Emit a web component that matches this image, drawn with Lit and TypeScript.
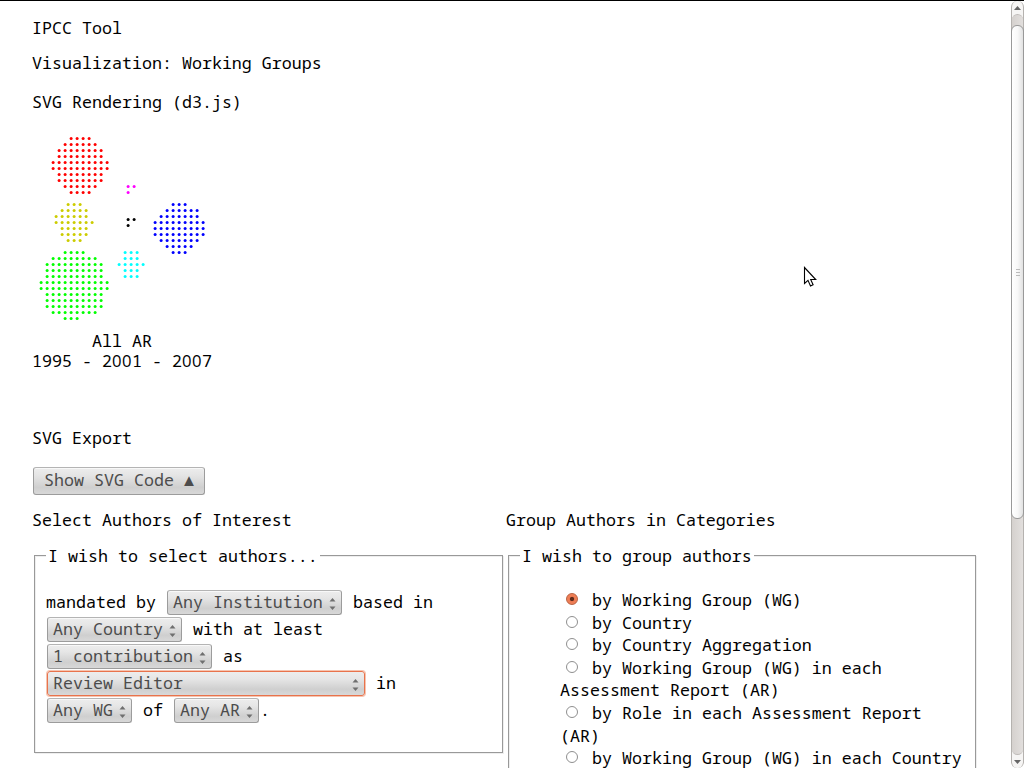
import { LitElement, html, svg, css } from "lit";
import { customElement, property, state } from "lit/decorators.js";

const STEP = 6;

/** One cluster of authors: colour, top row, and [first x, dot count] per row. */
interface Cluster {
  color: string;
  y: number;
  rows: [number, number][];
}

const CLUSTERS: Cluster[] = [
  { color: "#ff0000", y: 138.5, rows: [[71, 4], [65, 6], [59, 8], [59, 8], [53, 10], [53, 10], [59, 8], [59, 8], [65, 6], [71, 4]] },
  { color: "#cccc00", y: 204.5, rows: [[68, 3], [62, 5], [56, 6], [56, 7], [62, 5], [62, 5], [68, 3]] },
  { color: "#00ff00", y: 252.5, rows: [[65, 4], [53, 8], [47, 10], [47, 10], [47, 10], [41, 12], [41, 12], [47, 10], [47, 10], [47, 10], [53, 8], [65, 3]] },
  { color: "#0000ff", y: 204.5, rows: [[173, 3], [167, 6], [161, 7], [155, 9], [155, 9], [155, 9], [161, 7], [167, 5], [173, 3]] },
  { color: "#00ffff", y: 252.5, rows: [[125, 3], [125, 3], [119, 5], [125, 3], [125, 3]] },
  { color: "#ff00ff", y: 186.5, rows: [[128, 2], [128, 1]] },
  { color: "#000000", y: 219.5, rows: [[128, 2], [128, 1]] },
];

@customElement("author-plot")
class AuthorPlot extends LitElement {
  static styles = css`
    :host { display: block; }
    svg { display: block; }
  `;
  render() {
    return html`<svg width="200" height="200" viewBox="32 128 200 200">
      ${CLUSTERS.map((c) => svg`<g fill=${c.color}>${c.rows.map(([x, n], r) =>
        Array.from({ length: n }, (_, i) =>
          svg`<circle cx=${x + i * STEP + 0.1} cy=${c.y + r * STEP} r="1.5"></circle>`))}</g>`)}
    </svg>`;
  }
}

@customElement("drop-down")
class DropDown extends LitElement {
  @property() label = "";
  @property({ type: Boolean, reflect: true }) active = false;
  static styles = css`
    :host {
      box-sizing: border-box;
      display: inline-flex;
      justify-content: space-between;
      align-items: center;
      height: 25px;
      margin: 2px 1px 0;
      padding: 0 5px 2px 5px;
      border: 1px solid #9c9c9c;
      border-top-color: #b4b4b4;
      border-radius: 3px;
      background: linear-gradient(#ededed, #e6e6e6 30%, #cfcfcf 75%, #d8d8d8);
      box-shadow: inset 0 1px #f8f8f8;
      color: #4c4c4c;
    }
    :host([active]) {
      border-color: #e8734c;
      box-shadow: 0 0 0 1px #f6c4b0;
    }
    svg { display: block; margin-top: 5px; flex: none; }
  `;
  render() {
    return html`<span>${this.label}</span>
      <svg width="7" height="12" viewBox="0 0 7 12"><path d="M.5 3.5 3.5 0 6.5 3.5zM.5 8.5 3.5 12 6.5 8.5z" fill="#6f6f6f"></path></svg>`;
  }
}

const CATEGORIES = [
  "by Working Group (WG)",
  "by Country",
  "by Country Aggregation",
  "by Working Group (WG) in each Assessment Report (AR)",
  "by Role in each Assessment Report (AR)",
  "by Working Group (WG) in each Country",
];

@customElement("app-root")
class AppRoot extends LitElement {
  @state() private selected = 0;

  static styles = css`
    :host {
      display: block;
      font-family: "Noto Sans Mono", "DejaVu Sans Mono", monospace;
      font-size: 16.667px;
      line-height: 20px;
      color: #000;
    }
    .window {
      box-sizing: border-box;
      display: flex;
      height: 768px;
      overflow: hidden;
      border-top: 1px solid #000;
      background: #fff;
    }
    .page { width: 1011px; flex: none; box-sizing: border-box; padding: 17px 35px 0 32px; overflow: hidden; }
    .title { margin-bottom: 15px; }
    .heading { margin-bottom: 19px; }
    .sub { margin-bottom: 16px; }
    .caption { width: 180px; text-align: center; white-space: nowrap; margin-top: 3px; margin-bottom: 57px; }
    .caption div { height: 20px; }
    /* Plain, undotted zero at the monospace advance */
    .zero { font-family: "Open Sans", sans-serif; letter-spacing: 0.47px; line-height: 1; }
    .export { margin-bottom: 19px; }
    .show {
      display: block;
      box-sizing: border-box;
      height: 28px;
      width: 172px;
      margin: 0 0 15px 1px;
      padding: 0 0 3px;
      font: inherit;
      color: #4c4c4c;
      border: 1px solid #9c9c9c;
      border-top-color: #b4b4b4;
      border-radius: 3px;
      background: linear-gradient(#ededed, #e4e4e4 30%, #cfcfcf 75%, #d8d8d8);
      box-shadow: inset 0 1px #f8f8f8;
      white-space: nowrap;
    }
    .columns { display: grid; grid-template-columns: 474px 470px; align-items: start; }
    .col-title { margin-bottom: 16px; }
    fieldset {
      margin: 0 0 0 2px;
      padding: 0 0 0 11px;
      box-sizing: border-box;
      width: 469px;
      border: 1px solid #999;
      box-shadow: 1px 1px #eee, inset 1px 1px #eee;
      min-width: 0;
    }
    .group { width: 468px; height: 300px; }
    legend { padding: 0 2px; background: #fff; height: 18px; }
    .sentence { padding-top: 24px; height: 164px; }
    .line { display: flex; align-items: center; height: 27px; white-space: pre; }
    .institution { width: 175px; }
    .country { width: 135px; }
    .contribution { width: 165px; }
    .role { width: 318px; }
    .short { width: 85px; }
    .options { padding: 25px 8px 0 40px; margin: 0; list-style: none; line-height: 22.6px; }
    .dot {
      display: inline-block;
      box-sizing: border-box;
      width: 12px;
      height: 12px;
      margin: 0 14px 0 6px;
      border: 1px solid #8f8f8f;
      border-radius: 50%;
      background: #fff;
      vertical-align: 1px;
    }
    .dot.on { border-color: #b9603f; background: radial-gradient(circle, #5e2c1c 0 1.7px, #ee7b52 2.6px, #f0845e); }
    .scroll {
      box-sizing: border-box;
      width: 13px;
      flex: none;
      display: flex;
      flex-direction: column;
      border: solid #b5b2af;
      border-width: 0 1px;
      border-radius: 6px;
      background: #f6f5f4;
    }
    .cap { height: 13px; flex: none; display: grid; place-items: center; }
    .track {
      flex: 1;
      border: solid #bfbbb8;
      border-width: 1px 0;
      border-radius: 6px;
      background: linear-gradient(90deg, #d5d1ce, #e2dfdd);
    }
    .thumb {
      box-sizing: border-box;
      height: 494px;
      margin: 10px -1px 0;
      border: 1px solid #999;
      border-radius: 6px;
      background: linear-gradient(90deg, #fff, #f8f8f8 50%, #e2e2e2);
      display: grid;
      place-items: center;
    }
    .grip { width: 4px; height: 7px; background: repeating-linear-gradient(#bbb 0 1px, transparent 1px 3px); }
    .cursor { position: absolute; left: 803px; top: 266px; }
  `;

  render() {
    const zeros = html`<span class="zero">00</span>`;
    return html`<div class="window">
      <main class="page">
        <div class="title">IPCC Tool</div>
        <div class="heading">Visualization: Working Groups</div>
        <div class="sub">SVG Rendering (d3.js)</div>
        <author-plot></author-plot>
        <div class="caption"><div>All AR</div><div>1995 - 2${zeros}1 - 2${zeros}7</div></div>
        <div class="export">SVG Export</div>
        <button class="show">Show SVG Code ▲</button>
        <div class="columns">
          <section>
            <div class="col-title">Select Authors of Interest</div>
            <fieldset>
              <legend>I wish to select authors...</legend>
              <div class="sentence">
                <div class="line"><span>mandated by </span><drop-down class="institution" label="Any Institution"></drop-down><span> based in</span></div>
                <div class="line"><drop-down class="country" label="Any Country"></drop-down><span> with at least</span></div>
                <div class="line"><drop-down class="contribution" label="1 contribution"></drop-down><span> as</span></div>
                <div class="line"><drop-down class="role" label="Review Editor" active></drop-down><span> in</span></div>
                <div class="line"><drop-down class="short" label="Any WG"></drop-down><span> of </span><drop-down class="short" label="Any AR"></drop-down><span>.</span></div>
              </div>
            </fieldset>
          </section>
          <section>
            <div class="col-title">Group Authors in Categories</div>
            <fieldset class="group">
              <legend>I wish to group authors</legend>
              <ul class="options">
                ${CATEGORIES.map((c, i) => html`<li @click=${() => (this.selected = i)}><span class="dot ${i === this.selected ? "on" : ""}"></span>${c}</li>`)}
              </ul>
            </fieldset>
          </section>
        </div>
      </main>
      <div class="scroll">
        <div class="cap"><svg width="7" height="4"><path d="M0 4 3.5 0 7 4z" fill="#666"></path></svg></div>
        <div class="track"><div class="thumb"><div class="grip"></div></div></div>
        <div class="cap"><svg width="7" height="4"><path d="M0 0h7L3.5 4z" fill="#666"></path></svg></div>
      </div>
      <svg class="cursor" width="14" height="22" viewBox="0 0 14 22"><path d="M1.5 1.5v16l3.5-3.2 2.5 5.7 2.6-1.2-2.4-5.3h5z" fill="#fff" stroke="#000" stroke-width="1.1"></path></svg>
    </div>`;
  }
}
